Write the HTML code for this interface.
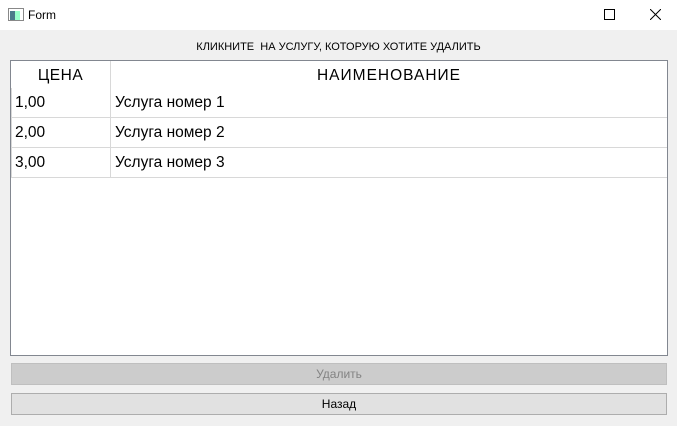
<!DOCTYPE html><html><head><style>
*{margin:0;padding:0;box-sizing:border-box}
body{width:677px;height:426px;background:#f0f0f0;font-family:"Liberation Sans",sans-serif;position:relative;overflow:hidden}
.a{position:absolute}
.t{top:0;left:0;width:677px;height:30px;background:#fff}
.cell{position:absolute;font-size:15.5px;color:#000;line-height:29px}
.hl{position:absolute;background:#d8d8d8;height:1px}
.vl{position:absolute;background:#d8d8d8;width:1px}
</style></head><body>
<div class="a t">
 <svg class="a" style="left:8px;top:8px" width="16" height="14"><rect x="0.5" y="0.5" width="15" height="12" fill="#fff" stroke="#888"/><rect x="2" y="3" width="5" height="9" fill="#4a7a8a"/><rect x="7" y="3" width="5" height="9" fill="#9fc"/></svg>
 <div class="a" style="left:28px;top:8px;font-size:12px">Form</div>
 <svg class="a" style="left:604px;top:9px" width="11" height="11"><rect x="0.5" y="0.5" width="10" height="10" fill="none" stroke="#000"/></svg>
 <svg class="a" style="left:650px;top:9px" width="11" height="11"><path d="M0 0L11 11M11 0L0 11" stroke="#000"/></svg>
</div>
<div class="a" style="left:0;width:677px;top:41px;text-align:center;font-size:11px">КЛИКНИТЕ&nbsp; НА УСЛУГУ, КОТОРУЮ ХОТИТЕ УДАЛИТЬ</div>
<div class="a" style="left:10px;top:60px;width:658px;height:296px;background:#fff;border:1px solid #828790"></div>
<div class="vl" style="left:11px;top:88px;height:90px"></div>
<div class="vl" style="left:110px;top:61px;height:117px"></div>
<div class="hl" style="left:11px;width:656px;top:117px"></div>
<div class="hl" style="left:11px;width:656px;top:147px"></div>
<div class="hl" style="left:11px;width:656px;top:177px"></div>
<div class="cell" style="left:11px;width:99px;top:61px;text-align:center;letter-spacing:.5px">ЦЕНА</div>
<div class="cell" style="left:111px;width:556px;top:61px;text-align:center;letter-spacing:1px">НАИМЕНОВАНИЕ</div>
<div class="cell" style="left:15px;top:88px">1,00</div><div class="cell" style="left:115px;top:88px">Услуга номер 1</div>
<div class="cell" style="left:15px;top:118px">2,00</div><div class="cell" style="left:115px;top:118px">Услуга номер 2</div>
<div class="cell" style="left:15px;top:148px">3,00</div><div class="cell" style="left:115px;top:148px">Услуга номер 3</div>
<div class="a" style="left:11px;top:363px;width:656px;height:22px;background:#ccc;border:1px solid #bfbfbf;text-align:center;font-size:12px;line-height:20px;color:#838383">Удалить</div>
<div class="a" style="left:11px;top:393px;width:656px;height:22px;background:#e1e1e1;border:1px solid #adadad;text-align:center;font-size:12px;line-height:20px">Назад</div>
</body></html>
